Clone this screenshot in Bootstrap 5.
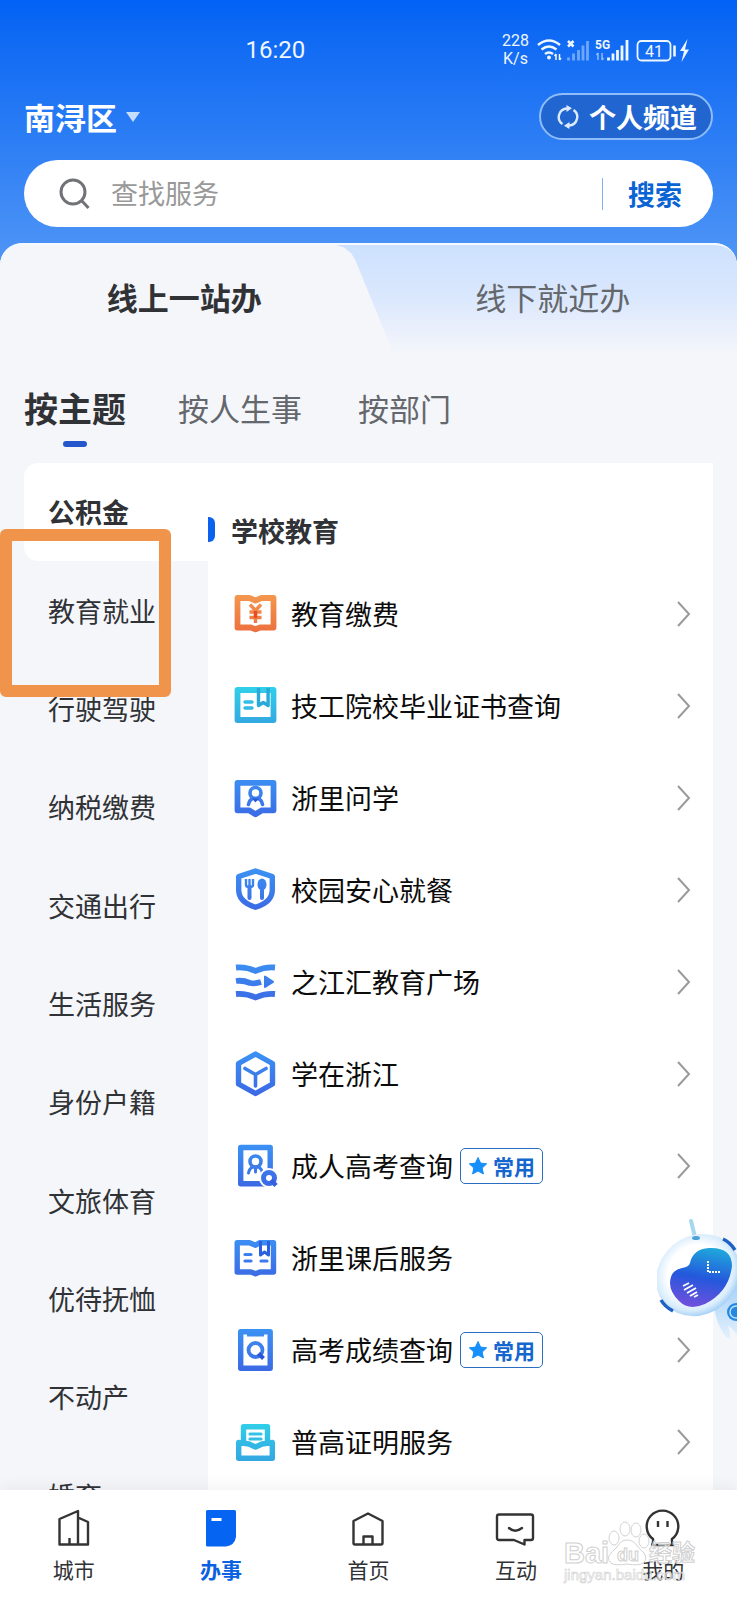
<!DOCTYPE html>
<html lang="zh-CN">
<head>
<meta charset="utf-8">
<meta name="viewport" content="width=device-width, initial-scale=1">
<title>办事</title>
<link href="https://cdn.jsdelivr.net/npm/bootstrap@5.3.0/dist/css/bootstrap.min.css" rel="stylesheet">
<script src="https://cdn.jsdelivr.net/npm/bootstrap@5.3.0/dist/js/bootstrap.bundle.min.js"></script>
<style>
  :root { --page: #f4f6fa; --blue: #0565f0; --ink: #303236; }
  body { font-family: "Noto Sans CJK SC", sans-serif; font-size: 27px; line-height: 40px; color: var(--ink);
    background: linear-gradient(#0062f6 0, #0b67f3 24px, #4c93f6 250px, #4c93f6 100%); }
  button, input { font-family: inherit; line-height: inherit; }
  a { color: inherit; text-decoration: none; }
  .statusbar { padding: 26px 46px 0 33.3%; font-family: Roboto, sans-serif; height: 74px; color: #eef6ff; }
  .clock { font-size: 24px; }
  .speed { font-size: 16px; line-height: 18px; }
  .gutter { padding-left: 24px; padding-right: 24px; }
  .placebar { margin-top: 19px; margin-bottom: 20px; }
  .district { font-size: 31px; color: #fff; border: 0; background: none; }
  .channel { height: 47px; border: 2px solid #8fbcfa; border-radius: 24px; background: #2065d0; color: #fff; padding: 0 14px 0 16px; gap: 10px; }
  .searchbox { height: 67px; border-radius: 34px; padding: 0 16px 0 35px; }
  .searchbox input { font-size: 27px; padding: 0; margin-left: 20px; box-shadow: none !important; }
  .searchbox input::placeholder { color: #999; }
  .searchbox .go { font-size: 27px; border-left: 1px solid #7fb0ee; line-height: 32px; color: #0a64d4; padding: 0 15px 0 25px; border-radius: 0; }
  .sheet { background: var(--page); border-radius: 22px 22px 0 0; margin-top: 16px; min-height: 0; }
  .modes { height: 112px; border-top: 2px solid #f6faff; border-radius: 22px 22px 0 0; background: linear-gradient(#cde1fe, #dbe8fd 50%, #e9effc 75%, var(--page)); }
  .modes::before { content: ""; position: absolute; inset: 0 47% 0 0; background: var(--page); border-top-left-radius: 20px;
    clip-path: polygon(0 0, 86% 0, 88% 2%, 90% 8%, 91% 14%, 100% 92%, 100% 100%, 0 100%); }
  .modes button { position: relative; border: 0; background: none; font-size: 31px; color: #64676c; padding: 0 0 6px; }
  .modes button.active { color: var(--ink); }
  .groups { padding-top: 31px; gap: 52px; height: 108px; }
  .groups button { display: flex; flex-direction: column; align-items: center; border: 0; background: none; padding: 0; font-size: 31px; line-height: 44px; color: #64676c; }
  .groups button.active { font-size: 34px; color: var(--ink); }
  .groups button.active::after { content: ""; width: 24px; height: 6px; border-radius: 3px; background: #2457cb; margin-top: 11px; }
  .catalog { min-height: 0; }
  .topics { flex: 0 0 184px; height: 1082px; display: grid; grid-auto-rows: 1fr; }
  .topics a { padding-left: 24px; display: flex; align-items: center; }
  .topics a.active { background: #fff; border-radius: 14px 0 0 14px; font-weight: 700; }
  .services { padding-bottom: 24px; }
  .services h2 { font-size: 27px; line-height: 40px; height: 105px; padding: 48px 0 0 23px; margin: 0; position: relative; }
  .services h2::before { content: ""; position: absolute; left: 0; top: 54px; width: 7px; height: 25px; border-radius: 0 6px 6px 0; background: #0a62ee; }
  .services a { height: 92px; padding: 0 22px 0 25px; color: #0c0c0c; }
  .services .pic { width: 44px; height: 44px; margin-right: 14px; flex: none; overflow: visible; }
  .often { font-size: 21px; line-height: 33px; height: 36px; border: 1px solid #2a6ec4; border-radius: 5px; color: #1466cf; padding: 0 7px; gap: 5px; margin-left: 7px; }
  .tabbar { height: 110px; font-size: 21px; line-height: 30px; box-shadow: 0 -4px 14px rgba(0,0,0,.05); z-index: 2; padding-top: 16px; }
  .tabbar svg { width: 44px; height: 44px; margin-bottom: 4px; }
  .tabbar .active { color: #0a62e2; font-weight: 700; }
  .callout-box { position: absolute; left: 0; top: 529px; width: 171px; height: 168px; border: 12px solid #f0934b; border-radius: 6px; z-index: 3; pointer-events: none; }
  .helper { position: absolute; right: 0; bottom: 260px; width: 80px; height: 124px; z-index: 3; }
  .stamp { position: absolute; right: 40px; bottom: 14px; width: 136px; height: 68px; z-index: 4; pointer-events: none; font-family: "Liberation Sans", "Noto Sans CJK SC", sans-serif; }
</style>
</head>
<body class="vh-100 d-flex flex-column overflow-hidden position-relative">
<svg width="0" height="0" class="position-absolute" aria-hidden="true">
  <defs>
    <linearGradient id="gb" gradientUnits="userSpaceOnUse" x1="0" y1="0" x2="0" y2="44"><stop stop-color="#3b92f3"/><stop offset="1" stop-color="#3c68e4"/></linearGradient>
    <linearGradient id="gc" gradientUnits="userSpaceOnUse" x1="0" y1="0" x2="0" y2="44"><stop stop-color="#30d3ea"/><stop offset="1" stop-color="#34a3e0"/></linearGradient>
    <linearGradient id="go" gradientUnits="userSpaceOnUse" x1="0" y1="0" x2="0" y2="44"><stop stop-color="#f49b50"/><stop offset="1" stop-color="#ec6b3c"/></linearGradient>
    <symbol id="chev" viewBox="0 0 14 26"><path d="M1 1l11 12L1 25" fill="none" stroke="#9a9a9a" stroke-width="2"/></symbol>
    <symbol id="star" viewBox="0 0 20 20"><path d="M10 1.500l2.600 5.600 6.100.7-4.500 4.200 1.200 6-5.400-3-5.400 3 1.200-6L1.300 7.800l6.100-.7z" fill="#1590fb" stroke="#1590fb" stroke-linejoin="round"/></symbol>
  </defs>
</svg>

<header class="flex-shrink-0">
  <div class="statusbar d-flex justify-content-between align-items-center">
    <span class="clock">16:20</span>
    <div class="d-flex align-items-center gap-2">
      <span class="speed text-center">228<br>K/s</span>
      <svg width="154" height="28" viewBox="0 0 154 28" fill="none" stroke="#eef6ff" stroke-width="2.500">
        <path d="M1 9q11-9 22 0M4.500 13.500q7.500-6 15 0M8 18q4-3 8 0"/><circle cx="12" cy="21.500" r="2" fill="#eef6ff" stroke="none"/>
        <path d="M19 18v6m-1.500-4l1.500-2M22.500 24v-6m1.500 4l-1.500 2" stroke-width="1.500"/>
        <path d="M31 5l5.500 5.500M36.500 5L31 10.500"/>
        <path d="M31.500 24.500v-3M36.500 24.500v-7M41.500 24.500V14M46 24.500V9.500M50.500 24.500V5" stroke="#6fa8fb" stroke-width="2.800"/>
        <text x="58" y="13" font-size="12" font-weight="700" fill="#eef6ff" stroke="none">5G</text>
        <path d="M61 17v7m-1.500-5l1.500-2M65 24v-7m1.500 5l-1.500 2" stroke="#8dbbfc" stroke-width="1.500"/>
        <path d="M71.500 24.500v-3M76 24.500v-7M80.500 24.500V14M85 24.500V9.500M90 24.500V4" stroke-width="2.800"/>
        <rect x="100.500" y="5" width="33" height="19.500" rx="4" stroke-width="1.800"/>
        <text x="117" y="20.500" font-size="16" text-anchor="middle" fill="#eef6ff" stroke="none">41</text>
        <path d="M137.500 9.500v11" stroke-width="2.600"/><path d="M150.500 3l-7.500 12h4l-2.500 11 7.500-12.500h-4z" fill="#eef6ff" stroke="none"/>
      </svg>
    </div>
  </div>
  <div class="placebar gutter d-flex justify-content-between align-items-center">
    <button class="district fw-bold p-0 d-flex align-items-center" type="button">南浔区
      <svg class="ms-2" width="16" height="12" viewBox="0 0 16 12"><path d="M1 1h14L8 11z" fill="#c6defd"/></svg>
    </button>
    <button class="channel fw-bold d-flex align-items-center" type="button">
      <svg width="22" height="24" viewBox="0 0 22 24" fill="none" stroke="#dcebff" stroke-width="2.400"><path d="M5.500 19A8.500 8.500 0 0 1 10 3.500M16.500 5A8.500 8.500 0 0 1 12 20.500"/><path d="M9.500 0l5.500 3.300L9.500 7zM12.500 17v7L7 20.700z" fill="#dcebff" stroke="none"/></svg>
      个人频道
    </button>
  </div>
  <form class="gutter" role="search">
    <div class="searchbox bg-white d-flex align-items-center">
      <svg class="flex-shrink-0" width="32" height="32" viewBox="0 0 32 32" fill="none" stroke="#707276" stroke-width="3"><circle cx="14" cy="14" r="12"/><path d="M22.500 22.500l7 7.500"/></svg>
      <input class="form-control border-0" type="text" placeholder="查找服务" aria-label="查找服务">
      <button class="go btn flex-shrink-0 fw-bold border-top-0 border-bottom-0 border-end-0" type="button">搜索</button>
    </div>
  </form>
</header>

<main class="sheet flex-grow-1 d-flex flex-column overflow-hidden">
  <div class="modes d-flex position-relative flex-shrink-0">
    <button class="w-50 active fw-bold" type="button">线上一站办</button>
    <button class="w-50" type="button">线下就近办</button>
  </div>
  <div class="groups gutter d-flex align-items-start flex-shrink-0">
    <button class="active fw-bold" type="button">按主题</button>
    <button type="button">按人生事</button>
    <button class="ms-1" type="button">按部门</button>
  </div>
  <div class="catalog gutter d-flex align-items-start flex-grow-1 overflow-hidden">
    <nav class="topics" aria-label="主题">
      <a class="active" href="#">公积金</a>
      <a href="#">教育就业</a>
      <a href="#">行驶驾驶</a>
      <a href="#">纳税缴费</a>
      <a href="#">交通出行</a>
      <a href="#">生活服务</a>
      <a href="#">身份户籍</a>
      <a href="#">文旅体育</a>
      <a href="#">优待抚恤</a>
      <a href="#">不动产</a>
      <a href="#">婚育</a>
    </nav>
    <section class="services bg-white flex-grow-1">
      <h2 class="fw-bold">学校教育</h2>
      <a class="d-flex align-items-center" href="#">
        <svg class="pic" viewBox="0 0 44 44" fill="none" stroke="url(#go)" stroke-width="5.800" stroke-linejoin="round"><path d="M4.500 6h12l6 2.500 6-2.500h12V35.500H27l-4.500 1.800L18 35.500H4.500z"/><path d="M17 12.500l5.500 6 5.500-6M22.500 18.500V31M16.500 20h12M16.500 25.500h12" stroke-width="3.400"/><path d="M22.500 19v7" stroke="#e94a20" stroke-width="3.400"/></svg>
        教育缴费<svg class="ms-auto" width="14" height="26"><use href="#chev"/></svg></a>
      <a class="d-flex align-items-center" href="#">
        <svg class="pic" viewBox="0 0 44 44" fill="none" stroke="url(#gc)" stroke-width="5.800" stroke-linejoin="round"><rect x="4.500" y="6" width="36" height="30"/><path d="M12 18h7M12 24h7" stroke-width="3.400" stroke-linecap="round"/><path d="M25.500 4v17.500l4.800-3 4.800 3V4" stroke="#28a9da" stroke-width="3.400"/></svg>
        技工院校毕业证书查询<svg class="ms-auto" width="14" height="26"><use href="#chev"/></svg></a>
      <a class="d-flex align-items-center" href="#">
        <svg class="pic" viewBox="0 0 44 44" fill="none" stroke="url(#gb)" stroke-width="5.800" stroke-linejoin="round"><path d="M4.500 6.800h36v27.500H29l-6.500 4-6.500-4H4.500z"/><circle cx="22.500" cy="17" r="5.500" stroke-width="3.600"/><path d="M15.500 28.500q1-5 4.500-6h5q3.500 1 4.500 6" stroke-width="3.600" stroke-linecap="round"/><path d="M19 22.500h7l-3.500 4z" fill="#2f55da" stroke="none"/></svg>
        浙里问学<svg class="ms-auto" width="14" height="26"><use href="#chev"/></svg></a>
      <a class="d-flex align-items-center" href="#">
        <svg class="pic" viewBox="0 0 44 44" fill="none" stroke="url(#gb)" stroke-width="5.400" stroke-linejoin="round"><path d="M22.500 3L39.300 8.500V22q0 12-16.800 17.300Q5.700 34 5.700 22V8.500z"/><path d="M13 11v6q0 2 3.500 2T20 17v-6M16.500 11v10" stroke-width="2.400"/><path d="M16.500 19v11M29 20v10" stroke-width="4" stroke-linecap="round"/><ellipse cx="29" cy="16.500" rx="4.500" ry="6" fill="url(#gb)" stroke="none"/></svg>
        校园安心就餐<svg class="ms-auto" width="14" height="26"><use href="#chev"/></svg></a>
      <a class="d-flex align-items-center" href="#">
        <svg class="pic" viewBox="0 0 44 44" fill="none" stroke="url(#gb)" stroke-width="5.800" stroke-linejoin="round"><path d="M3 7.500q10-1 19.500 3.500Q32 6.500 42 7.500M3 21q7-1 14 2 5 1 11-1M3 34q10-1 19.500 3.500Q32 33 42 34"/><path d="M32 16.500v10.500l8-5.200z" fill="url(#gb)" stroke-width="2"/></svg>
        之江汇教育广场<svg class="ms-auto" width="14" height="26"><use href="#chev"/></svg></a>
      <a class="d-flex align-items-center" href="#">
        <svg class="pic" viewBox="0 0 44 44" fill="none" stroke="url(#gb)" stroke-width="5.400" stroke-linejoin="round"><path d="M22.500 2L39.500 11.500v20.500L22.500 41.500 5.500 32V11.500z"/><path d="M12 16.500l10.500 6 10.500-6M22.500 22.500V34" stroke-width="3.600" stroke-linecap="round"/></svg>
        学在浙江<svg class="ms-auto" width="14" height="26"><use href="#chev"/></svg></a>
      <a class="d-flex align-items-center" href="#">
        <svg class="pic" viewBox="0 0 44 44" fill="none" stroke="url(#gb)" stroke-width="5.400" stroke-linejoin="round"><path d="M37.200 36V3.500H7.700v36.300h29.500z"/><circle cx="22.500" cy="17.500" r="5.500" stroke-width="3.600"/><path d="M15.500 29q1-5 4.500-6h5q3.500 1 4.500 6M22.500 23v5" stroke-width="3" stroke-linecap="round"/><circle cx="36" cy="34" r="10" fill="#fff" stroke="none"/><circle cx="36" cy="34" r="5.500" stroke-width="5"/><path d="M38 36l5 5.500" stroke="#3560e2" stroke-width="4.500"/></svg>
        成人高考查询<span class="often fw-bold d-flex align-items-center"><svg width="20" height="20"><use href="#star"/></svg>常用</span><svg class="ms-auto" width="14" height="26"><use href="#chev"/></svg></a>
      <a class="d-flex align-items-center" href="#">
        <svg class="pic" viewBox="0 0 44 44" fill="none" stroke="url(#gb)" stroke-width="5.400" stroke-linejoin="round"><path d="M4.200 6.700h12.300l6 2.500 4-2.500h14V36H27l-4.500 1.800L18 36H4.200z"/><path d="M12 18.500h6M12 25h6M28 25h6" stroke-width="3.200" stroke-linecap="round"/><path d="M27.500 5v14l4-3 4 3V5" stroke="#2c5fe0" stroke-width="3"/></svg>
        浙里课后服务<svg class="ms-auto" width="14" height="26"><use href="#chev"/></svg></a>
      <a class="d-flex align-items-center" href="#">
        <svg class="pic" viewBox="0 0 44 44" fill="none" stroke="url(#gb)" stroke-width="5.400" stroke-linejoin="round"><rect x="7.700" y="3.700" width="29.500" height="36.500"/><path d="M14 6.500h17" stroke-width="4"/><circle cx="22.500" cy="22" r="7" stroke-width="3.800"/><path d="M25.500 25.500l5 5" stroke="#2c56d8" stroke-width="4"/></svg>
        高考成绩查询<span class="often fw-bold d-flex align-items-center"><svg width="20" height="20"><use href="#star"/></svg>常用</span><svg class="ms-auto" width="14" height="26"><use href="#chev"/></svg></a>
      <a class="d-flex align-items-center" href="#">
        <svg class="pic" viewBox="0 0 44 44" fill="none" stroke="url(#gc)" stroke-width="5.400" stroke-linejoin="round"><path d="M10.500 24V6.700h24V24"/><path d="M17 14h11M17 19h11" stroke-width="3.200" stroke-linecap="round"/><path d="M5.700 22.500L16 24l6.500 3 6.500-3 10.300-1.500V38.200H5.700z"/></svg>
        普高证明服务<svg class="ms-auto" width="14" height="26"><use href="#chev"/></svg></a>
    </section>
  </div>
</main>

<nav class="tabbar bg-white d-flex flex-shrink-0 text-center" aria-label="主导航">
  <a class="col d-flex flex-column align-items-center" href="#"><svg viewBox="0 0 44 44" fill="none" stroke="#333" stroke-width="2.400" stroke-linejoin="round"><path d="M7.500 13L26 5v33.500H7.500zM26 11.500l10 4.500v22.500H26M17.500 38v-6"/></svg>城市</a>
  <a class="col d-flex flex-column align-items-center active" href="#"><svg viewBox="0 0 44 44"><path d="M8 4h27.500q1.500 0 1.500 1.500V31q-1.500 8.500-10 9.500H8.500Q7 40.500 7 39V5.500Q7 4 8.500 4z" fill="#0565f2"/><path d="M12.500 13.500h10" stroke="#fff" stroke-width="3"/></svg>办事</a>
  <a class="col d-flex flex-column align-items-center" href="#"><svg viewBox="0 0 44 44" fill="none" stroke="#333" stroke-width="2.400" stroke-linejoin="round"><path d="M6.500 15L21 7.500 35.500 15v22q0 1.500-1.500 1.500H8q-1.500 0-1.500-1.500zM16.500 38v-7.500h9V38"/></svg>首页</a>
  <a class="col d-flex flex-column align-items-center" href="#"><svg viewBox="0 0 44 44" fill="none" stroke="#333" stroke-width="2.400" stroke-linejoin="round"><path d="M5 8.500h32q2 0 2 2V32q0 2-2 2h-6.500v4.500L20 34H5q-2 0-2-2V10.500q0-2 2-2z"/><path d="M15 22q6 5.500 13 0" stroke-linecap="round"/></svg>互动</a>
  <a class="col d-flex flex-column align-items-center" href="#"><svg viewBox="0 0 44 44" fill="none" stroke="#333" stroke-width="2.400" stroke-linejoin="round"><path d="M12 33A15.800 15.800 0 1 1 31 33q-.5 3 1 6H11q1.500-3 1-6zM17 15v6M26.500 15v6"/></svg>我的</a>
</nav>

<div class="callout-box"></div>
<svg class="helper" viewBox="0 0 80 124" aria-hidden="true">
  <defs>
    <radialGradient id="hd" cx=".5" cy=".45" r=".55"><stop offset=".6" stop-color="#fff"/><stop offset=".85" stop-color="#d8ecfc"/><stop offset="1" stop-color="#a3cff6"/></radialGradient>
    <linearGradient id="fc" x1=".6" y1="0" x2=".4" y2="1"><stop stop-color="#1fa6dc"/><stop offset=".5" stop-color="#2458dc"/><stop offset="1" stop-color="#7050dc"/></linearGradient>
    <linearGradient id="bd" x1="0" y1="0" x2="0" y2="1"><stop stop-color="#a9d3f9"/><stop offset="1" stop-color="#e2f0fd"/></linearGradient>
  </defs>
  <path d="M56 84q2 22 11 34 4 6 6 4 0-7-2-13l9 9V70z" fill="url(#bd)"/>
  <path d="M38 21L34 5" stroke="#a5d8ee" stroke-width="4" stroke-linecap="round"/>
  <ellipse cx="41" cy="59" rx="44" ry="39" transform="rotate(-40 41 59)" fill="url(#hd)"/>
  <ellipse cx="39" cy="22" rx="4" ry="2" fill="#4aa0d8"/>
  <path d="M33 47Q36 33 52 32q23-1 23 18-3 26-27 38-16 7-26-3-12-12-8-24 2-7 11-9 7-1 8-5z" fill="url(#fc)"/>
  <path d="M51 45v11h12" fill="none" stroke="#fff" stroke-width="2" stroke-dasharray="2 1"/>
  <g stroke="#fff" stroke-width="1.800"><path d="M26 70l6-3M27 74l9-5M30 77l9-5M33 80l7-4M37 81l4-2"/></g>
  <path d="M4 84q4 7 12 11M66 23q7 3 12 11" fill="none" stroke="#1d62c4" stroke-width="3.500"/>
  <circle cx="79" cy="96" r="9" fill="#2588e0"/><circle cx="79" cy="96" r="6" fill="none" stroke="#b9e1ff" stroke-width="1.500"/>
</svg>
<svg class="stamp" viewBox="0 0 136 68" aria-hidden="true">
  <g fill="#fff" fill-opacity=".6" stroke="#d3d3d3" stroke-width="1"><ellipse cx="53" cy="20" rx="5" ry="7"/><ellipse cx="64" cy="11" rx="5" ry="7"/><ellipse cx="75" cy="12" rx="5" ry="7"/><ellipse cx="83" cy="23" rx="5" ry="7"/><path d="M66 22q7 0 11 7l6 6q4 6-1 10-4 3-16 1-12 2-16-1-5-5 0-10l6-6q4-7 10-7z"/></g>
  <g fill="#fff" fill-opacity=".6" stroke="#d0d0d0" stroke-width="1" font-weight="700">
    <text x="3" y="45" font-size="29">Bai</text><text x="56" y="43" font-size="18">du</text><text x="88" y="43" font-size="23">经验</text>
    <text x="3" y="62" font-size="15" font-weight="400" stroke-width=".6">jingyan.baidu.com</text>
  </g>
</svg>
</body>
</html>
